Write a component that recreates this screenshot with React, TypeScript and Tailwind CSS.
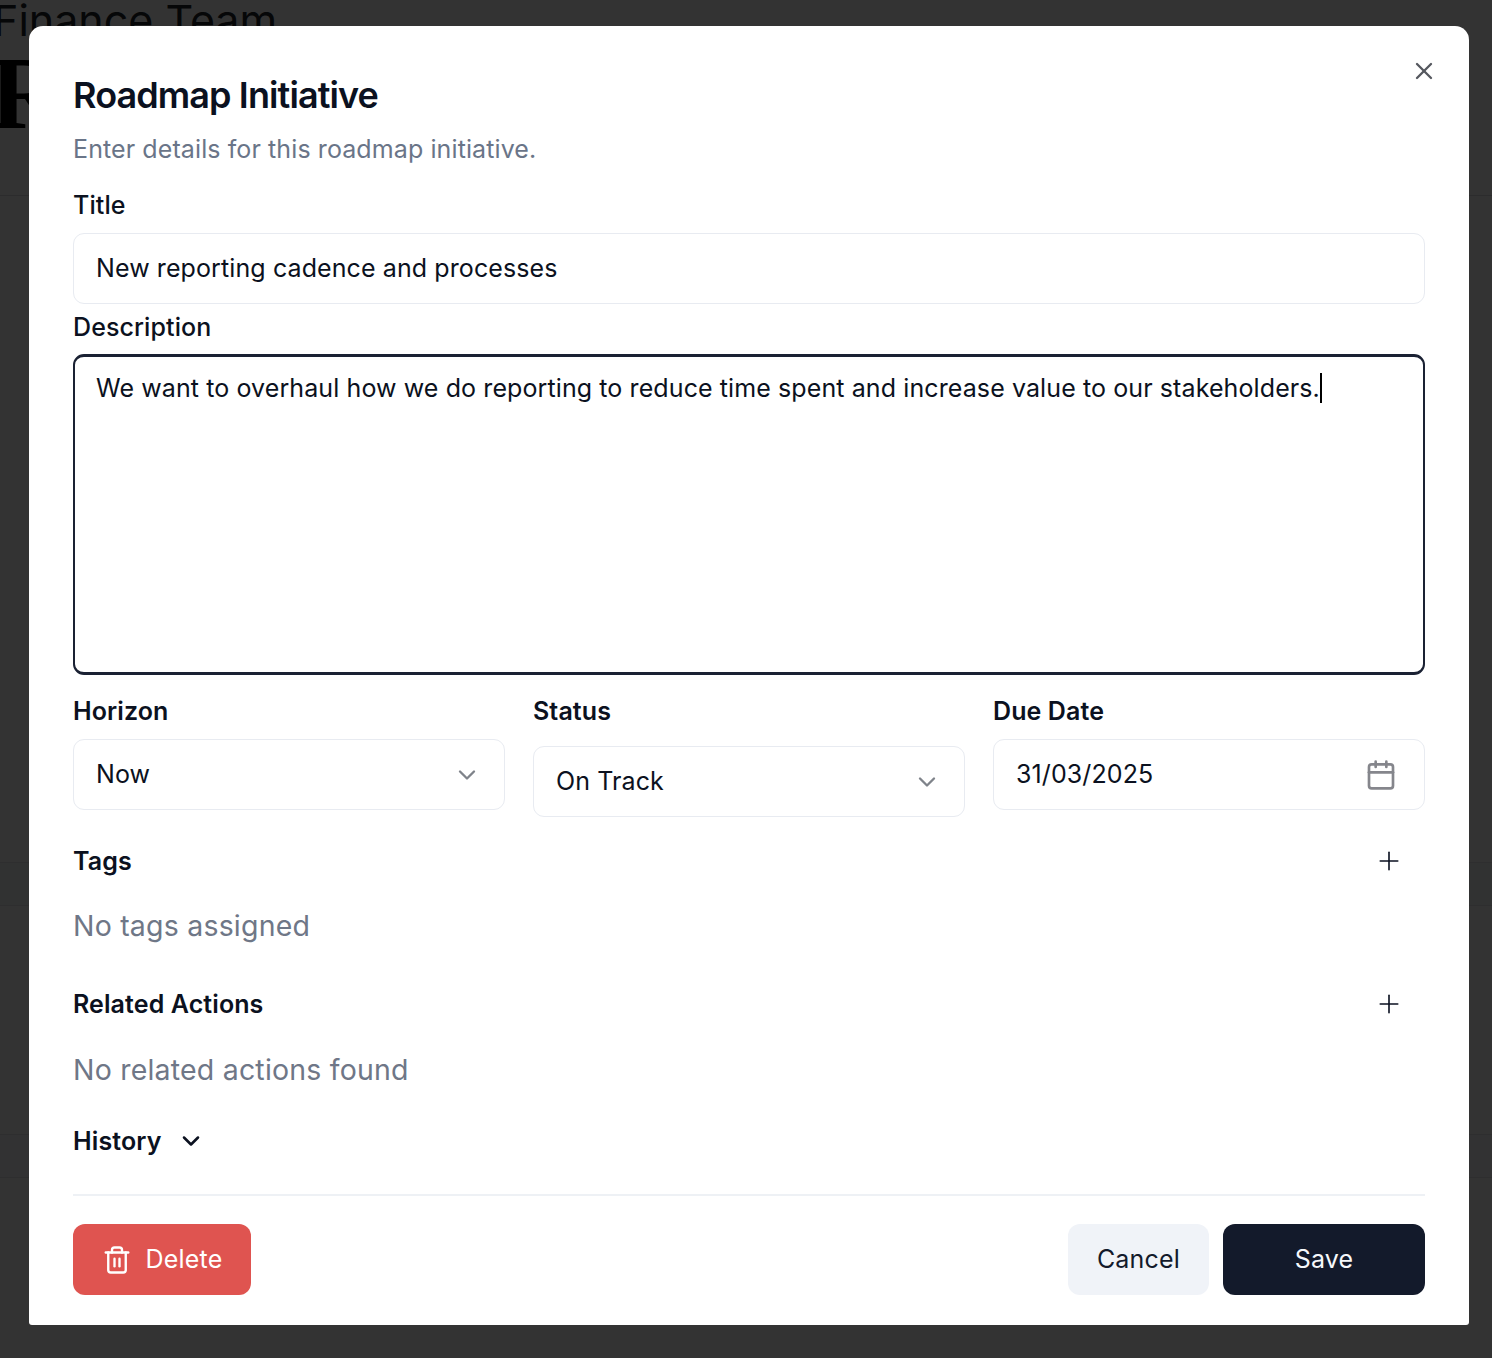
import { Calendar, ChevronDown, Plus, Trash2, X } from 'lucide-react'

function Label({ children, medium }: { children: string; medium?: boolean }) {
  return <div className={`text-[25px] leading-[30px] text-[#0b1120] tracking-[0.1px] ${medium ? 'font-medium' : 'font-semibold'}`}>{children}</div>
}

function Select({ value, className }: { value: string; className?: string }) {
  return (
    <div className={`h-[71px] rounded-[11px] border border-[#e8ebf1] flex items-center justify-between pl-[22px] pr-[23px] text-[25px] text-[#0b1120] tracking-[0.1px] ${className ?? ''}`}>
      <span>{value}</span>
      <ChevronDown size={28} strokeWidth={2} className="text-[#7f838a]" />
    </div>
  )
}

function Background() {
  return (
    <div className="h-[1358px] bg-white overflow-hidden flex flex-col">
      <div className="h-[196px] shrink-0 border-b border-[#d9dce2] flex flex-col">
        <div className="-ml-[7px] -mt-[6px] text-[43px] leading-[52px] text-[#22242a]">Finance Team</div>
        <div className="-ml-[10px] mt-[5px] text-[104px] leading-[84px] font-bold text-black font-['Liberation_Serif']">R</div>
      </div>
      <div className="mt-[666px] h-[44px] shrink-0 border-y border-[#e5e7ec] bg-[#f6f7f9]" />
      <div className="mt-[228px] h-[44px] shrink-0 border-y border-[#e5e7ec] bg-[#fbfbfc]" />
    </div>
  )
}

function App() {
  return (
    <div className="relative h-[1358px] overflow-hidden font-['Inter',sans-serif]">
      <Background />
      <div className="absolute inset-0 bg-black/80" />
      <div className="absolute left-[29px] top-[26px] w-[1440px] h-[1299px] bg-white rounded-t-[14px] rounded-b-[3px] px-[44px] pt-[44px]">
        <button className="absolute right-[31px] top-[31px] text-[#55585f]">
          <X size={28} strokeWidth={2} />
        </button>

        <h2 className="text-[36px] leading-[50px] font-semibold tracking-[-0.9px] text-[#0b1120]">Roadmap Initiative</h2>
        <p className="mt-[14px] text-[25px] leading-[30px] tracking-[0.1px] text-[#6a7588]">Enter details for this roadmap initiative.</p>

        <div className="mt-[26px]"><Label medium>Title</Label></div>
        <div className="mt-[13px] h-[71px] rounded-[11px] border border-[#e8ebf1] flex items-center px-[22px] text-[25px] tracking-[0.1px] text-[#0b1120]">
          New reporting cadence and processes
        </div>

        <div className="mt-[8px]"><Label medium>Description</Label></div>
        <div className="mt-[12px] h-[321px] rounded-[11px] border-x-2 border-y-[3px] border-[#1a2133] px-[21px] py-[16px] text-[25px] leading-[30px] tracking-[0.1px] text-[#0b1120]">
          We want to overhaul how we do reporting to reduce time spent and increase value to our stakeholders.<span className="inline-block w-[2px] h-[30px] bg-black align-top" />
        </div>

        <div className="mt-[21px] grid grid-cols-3 gap-[28px] items-start">
          <div>
            <Label>Horizon</Label>
            <Select value="Now" className="mt-[13px]" />
          </div>
          <div>
            <Label>Status</Label>
            <Select value="On Track" className="mt-[20px]" />
          </div>
          <div>
            <Label>Due Date</Label>
            <div className="mt-[13px] h-[71px] rounded-[11px] border border-[#e8ebf1] flex items-center justify-between pl-[22px] pr-[27px] text-[25px] tracking-[0.1px] text-[#0b1120]">
              <span>31/03/2025</span>
              <Calendar size={32} strokeWidth={2} className="text-[#85868c]" />
            </div>
          </div>
        </div>

        <div className="mt-[29px] flex items-center justify-between pr-[21px]">
          <Label>Tags</Label>
          <Plus size={30} strokeWidth={1.3} className="text-[#0b1120]" />
        </div>
        <p className="mt-[32px] text-[28.5px] leading-[36px] tracking-[0.2px] text-[#6f7787]">No tags assigned</p>

        <div className="mt-[45px] flex items-center justify-between pr-[21px]">
          <Label>Related Actions</Label>
          <Plus size={30} strokeWidth={1.3} className="text-[#0b1120]" />
        </div>
        <p className="mt-[33px] text-[28.5px] leading-[36px] tracking-[0.2px] text-[#6f7787]">No related actions found</p>

        <div className="mt-[38px] flex items-center gap-[16px]">
          <Label>History</Label>
          <ChevronDown size={28} strokeWidth={2.2} className="text-[#0b1120]" />
        </div>

        <div className="mt-[38px] border-t-2 border-[#eef1f5]" />

        <div className="mt-[28px] flex items-center justify-between">
          <button className="h-[71px] w-[178px] rounded-[12px] bg-[#df5450] text-white text-[25px] tracking-[0.2px] flex items-center justify-center gap-[14px]">
            <Trash2 size={30} strokeWidth={1.9} />
            Delete
          </button>
          <div className="flex gap-[14px]">
            <button className="h-[71px] w-[141px] rounded-[12px] bg-[#f0f3f8] text-[#131a2b] text-[25px] tracking-[0.2px]">Cancel</button>
            <button className="h-[71px] w-[202px] rounded-[12px] bg-[#131a2b] text-[#f6f8fb] text-[25px] tracking-[0.2px]">Save</button>
          </div>
        </div>
      </div>
    </div>
  )
}

export default App
